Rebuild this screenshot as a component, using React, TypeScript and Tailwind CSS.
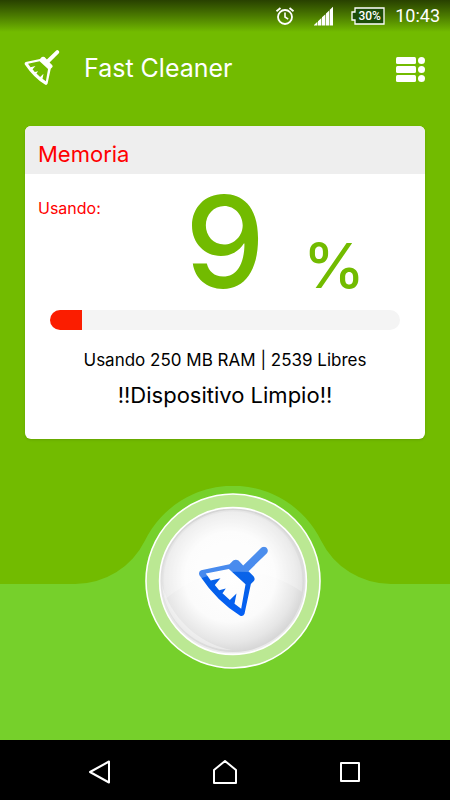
import { useState } from "react";

const MEMORY = { percent: 9, usedMb: 250, freeMb: 2539 };

export default function App() {
  const [memory] = useState(MEMORY);

  return (
    <div className="flex min-h-screen flex-col bg-[#72bb00] font-[Inter,sans-serif]">
      <StatusBar />
      <Header />
      <main className="flex flex-1 flex-col">
        <MemoryCard percent={memory.percent} usedMb={memory.usedMb} freeMb={memory.freeMb} />
        <CleanArea />
      </main>
      <NavBar />
    </div>
  );
}

function StatusBar() {
  return (
    <div className="flex h-8 items-center justify-end bg-linear-to-b from-[#284100] to-[#72bb00] pr-[10px] text-white">
      <svg className="mr-[18px] size-5" viewBox="0 0 20 20" fill="none" stroke="currentColor" aria-hidden="true">
        <circle cx="10" cy="11" r="7" strokeWidth="1.8" />
        <path d="M10 6.5V11l3.2 2.2" strokeWidth="1.6" />
        <path d="M1.5 5.2 5.5 2M18.5 5.2 14.5 2" strokeWidth="1.8" />
      </svg>
      <svg className="mr-[18px] h-5 w-5" viewBox="0 0 20 20" fill="currentColor" aria-hidden="true">
        <path d="M1 19.5V19l3.4-3.2v3.7zM5 19.5v-4.3l3.4-3.2v7.5zM9 19.5v-8.2l3.4-3.1v11.3zM13 19.5V7.4l3.2-3v15.1zM16.8 19.5V3.8L20 .8v18.7z" />
      </svg>
      <div className="relative mr-[10px] h-[18px] w-[34px]">
        <svg className="absolute inset-0" width="34" height="18" viewBox="0 0 34 18" aria-hidden="true">
          <path
            d="M4 1h29v16H4v-4H1V5h3z"
            fill="#1d4d08"
            stroke="white"
            strokeWidth="1.3"
          />
        </svg>
        <span className="relative block pl-[3px] text-center font-[Roboto,sans-serif] text-xs leading-[18px] font-medium">30%</span>
      </div>
      <span className="font-[Roboto,sans-serif] text-lg leading-8">10:43</span>
    </div>
  );
}

function Header() {
  return (
    <header className="flex h-[94px] items-start px-6 pt-[18px] text-white">
      <svg className="h-[35px] w-9" viewBox="58 50 206 208" fill="currentColor" aria-hidden="true">
        <Broom />
      </svg>
      <h1 className="ml-6 text-[25px] leading-9">Fast Cleaner</h1>
      <button type="button" aria-label="Menu" className="ml-auto pt-[6px]">
        <svg className="h-7 w-8" viewBox="0 0 32 28" fill="currentColor" aria-hidden="true">
          {[1, 10, 19].map((y) => (
            <g key={y}>
              <rect x="2" y={y} width="20" height="7" rx="1.5" />
              <circle cx="27.5" cy={y + 3.5} r="3.5" />
            </g>
          ))}
        </svg>
      </button>
    </header>
  );
}

function MemoryCard({ percent, usedMb, freeMb }: { percent: number; usedMb: number; freeMb: number }) {
  return (
    <section className="mx-[25px] mb-[47px] overflow-hidden rounded-md bg-white pb-[28px] shadow-sm">
      <h2 className="bg-[#eeeeee] px-[13px] pt-2 text-[22px] leading-10 text-[#ff0000]">Memoria</h2>
      <div className="grid grid-cols-3 items-baseline px-[13px]">
        <span className="self-start pt-6 text-base leading-5 text-[#ff0000]">Usando:</span>
        <span className="text-center text-[127px] leading-[136px] font-medium text-[#72bb00]">{percent}</span>
        <span className="pl-4 text-[62px] leading-none font-medium text-[#72bb00]">%</span>
      </div>
      <div
        className="mx-[25px] h-5 overflow-hidden rounded-full bg-[#f4f4f4]"
        role="progressbar"
        aria-label="Memoria"
        aria-valuenow={percent}
      >
        <div className="h-full bg-[#fb1d00]" style={{ width: `${percent}%` }} />
      </div>
      <p className="pt-[18px] text-center text-[17px] leading-6 text-black">
        Usando {usedMb} MB RAM | {freeMb} Libres
      </p>
      <p className="pt-[7px] text-center text-[22px] leading-8 text-black">!!Dispositivo Limpio!!</p>
    </section>
  );
}

/** Light green ground that swells up around the round clean button. */
function CleanArea() {
  return (
    <section className="grid flex-1">
      <div className="flex flex-col [grid-area:1/1]">
        <div className="flex justify-center pl-4">
          <svg className="h-[98px] w-[316px]" viewBox="0 0 316 98" fill="#76d02b" aria-hidden="true">
            <path d="M0 98A78 78 0 0 0 70 54.6A98 98 0 0 1 246 54.6A78 78 0 0 0 316 98Z" />
          </svg>
        </div>
        <div className="flex-1 bg-[#76d02b]" />
      </div>
      <div className="flex justify-center pt-[7px] pb-[71px] pl-4 [grid-area:1/1]">
        <button type="button" aria-label="Limpiar" className="size-44 rounded-full">
          <CleanDial />
        </button>
      </div>
    </section>
  );
}

function CleanDial() {
  return (
    <svg className="size-44" viewBox="0 0 176 176" aria-hidden="true">
      <defs>
        <radialGradient id="dial" cx="0.48" cy="0.47" r="0.58">
          <stop offset="0" stopColor="#ffffff" />
          <stop offset="0.55" stopColor="#fbfbfb" />
          <stop offset="0.8" stopColor="#e6e6e6" />
          <stop offset="1" stopColor="#cccccc" />
        </radialGradient>
        <linearGradient id="rim" x1="0" y1="0" x2="0" y2="1">
          <stop offset="0" stopColor="#d4d4d4" />
          <stop offset="1" stopColor="#ececec" />
        </linearGradient>
        <linearGradient id="broom" x1="0" y1="0" x2="0" y2="1">
          <stop offset="0" stopColor="#1269e6" />
          <stop offset="0.6" stopColor="#0560ea" />
          <stop offset="1" stopColor="#0560f5" />
        </linearGradient>
        <clipPath id="face">
          <circle cx="88" cy="88" r="69.5" />
        </clipPath>
      </defs>
      <circle cx="88" cy="88" r="87" fill="#bbe893" stroke="white" strokeWidth="1.6" />
      <circle cx="88" cy="88" r="73.4" fill="url(#rim)" stroke="white" strokeWidth="1.6" />
      <circle cx="88" cy="88" r="71" fill="url(#dial)" />
      <path d="M17 92A71 71 0 0 0 87 157A90 90 0 0 1 17 92Z" fill="white" opacity="0.4" />
      <svg x="54" y="53.5" width="69" height="69.5" viewBox="58 50 206 208" fill="url(#broom)">
        <Broom />
      </svg>
      <path
        clipPath="url(#face)"
        d="M0 0H176V112L157 99A110 110 0 0 0 23 104L0 118Z"
        fill="white"
        opacity="0.25"
      />
    </svg>
  );
}

function Broom() {
  return (
    <path
      fillRule="evenodd"
      d="M244 54Q252 47 260 54Q267 62 261 70L206 124L221 139Q227 147 222 153L213 162L194 251Q190 260 181 257Q112 215 59 136Q55 126 64 121L149 103L160 92Q168 87 176 92L190 107ZM78 131L93 152L122 145L105 165L118 181L138 176L128 190L150 210L170 191L164 221L184 236L197 163L147 117Z"
    />
  );
}

function NavBar() {
  return (
    <nav className="flex h-[60px] items-center bg-black px-9 pt-1 text-white">
      <button type="button" aria-label="Back" className="flex flex-1 justify-center">
        <svg className="size-6" viewBox="0 0 24 24" fill="none" stroke="currentColor" strokeWidth="2" strokeLinejoin="round">
          <path d="M22 1.5v21L3 12z" />
        </svg>
      </button>
      <button type="button" aria-label="Home" className="flex flex-1 justify-center">
        <svg className="size-6" viewBox="0 0 24 24" fill="none" stroke="currentColor" strokeWidth="2" strokeLinejoin="round">
          <path d="M1 23V10l11-9 11 9v13z" />
        </svg>
      </button>
      <button type="button" aria-label="Recent apps" className="flex flex-1 justify-center">
        <svg className="size-6" viewBox="0 0 24 24" fill="none" stroke="currentColor" strokeWidth="2" strokeLinejoin="round">
          <path d="M2 3h18v18H2z" />
        </svg>
      </button>
    </nav>
  );
}
